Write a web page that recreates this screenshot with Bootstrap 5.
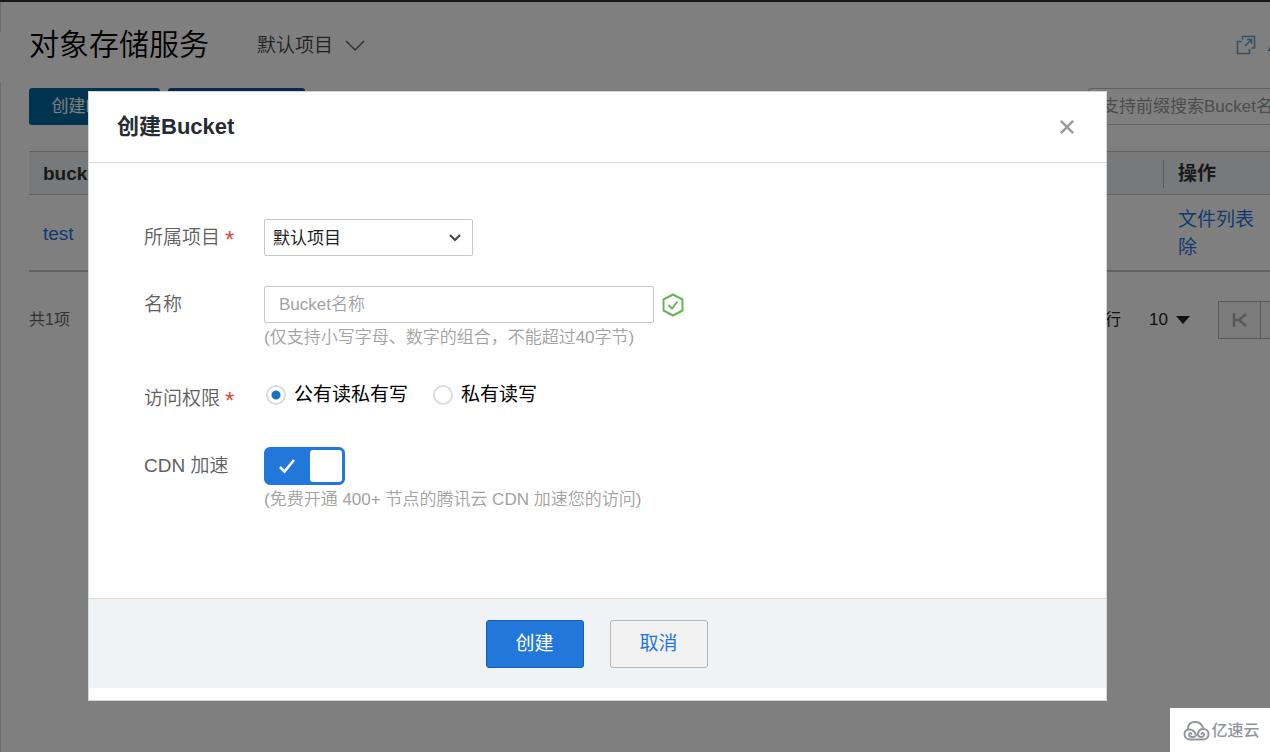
<!DOCTYPE html>
<html lang="zh-CN">
<head>
<meta charset="utf-8">
<meta name="viewport" content="width=device-width, initial-scale=1">
<title>对象存储服务</title>
<link href="https://cdn.jsdelivr.net/npm/bootstrap@5.3.0/dist/css/bootstrap.min.css" rel="stylesheet">
<style>
body { font-family: "Liberation Sans", "Noto Sans CJK SC", sans-serif; font-size: 19px; line-height: 28px; color: #000; background: #fff; }
a { color: #1f75da; text-decoration: none; }
.app-shell { border-top: 2px solid #2c2e38; min-height: 100vh; background: linear-gradient(#d8d8d8 30px, #fff 30px, #fff 80px, #d8d8d8 80px) left / 1px 100% no-repeat; }
/* the console is wider than a small window and is cut at its right edge */
.app-page { width: calc(100% + 120px); padding-left: 29px; }
.app-head { height: 86px; }
.app-title { font-size: 30px; line-height: 40px; font-weight: 350; }
.project-menu { color: #444; font-weight: 350; border: 0; padding: 2px 0 0; font-size: 19px; margin-left: 48px; }
.docs-link { width: 154px; }
.tool-btn { height: 37px; font-size: 17px; line-height: 24px; border: 0; border-radius: 3px; padding: 6px 0; color: #fff; }
.tool-create { width: 131px; background: #06699f; }
.tool-repair { width: 137px; background: #17529a; }
.tool-search { width: 302px; height: 37px; border: 1px solid #c4c4c4; border-radius: 3px; font-size: 17px; padding: 0 13px; }
.tool-search::placeholder { color: #999; opacity: 1; }
.bucket-table { margin: 26px 0 0; border-bottom: 2px solid #c4c4c4; }
.bucket-table > :not(caption) > * > * { padding: 2px 14px 0; vertical-align: middle; }
.bucket-table th { height: 43px; background: #eff2f5; border-top: 1px solid #c4c4c4; border-bottom: 1px solid #c4c4c4; color: #333; }
.bucket-table td { height: 76px; border: 0; }
.bucket-table > tbody > tr > td { padding-top: 4px; }
.col-action { width: 226px; }
.col-action-title { border-left: 1px solid #bbb; margin-left: -15px; padding-left: 14px; }
.pager-row { margin-top: 29px; font-size: 16px; color: #666; }
.pager-size { font-weight: 500; color: #222; border: 0; padding: 0; margin: 0 28px; font-size: 17px; }
.pager-btn { width: 43px; height: 38px; border: 1px solid #b4b4b4; border-radius: 0; padding: 0; background: #f7f7f7; }
.pager-btn + .pager-btn { border-left: 0; }

.mask { background: rgba(0, 0, 0, .5); padding: 91px 163px 52px 88px; z-index: 10; }
.dialog { background: #fff; border: 1px solid #d4d6d8; }
.dialog-head { height: 71px; padding: 0 28px; border-bottom: 1px solid #d4d8dc; }
.dialog-title { font-size: 22px; line-height: 32px; font-weight: 700; color: #262c33; }
.dialog-body { padding: 56px 55px 86px; }
.dialog-foot { height: 90px; background: #eff3f6; border-top: 1px solid #dcdee0; margin-bottom: 12px; padding-right: 2px; gap: 26px; }
.field-row { min-height: 37px; margin-bottom: 30px; }
.field-label { width: 120px; flex: none; color: #606060; font-weight: 350; padding-top: 5px; }
.star { color: #e0483e; margin-left: 5px; font-size: 24px; line-height: 20px; vertical-align: -4px; }
.hint { color: #a2a2a2; font-size: 17px; line-height: 24px; font-weight: 350; margin-top: 3px; }
.box { height: 37px; border: 1px solid #c4c7ca; border-radius: 2px; font-size: 17px; line-height: 24px; color: #222; }
.box-select { width: 209px; padding: 3px 32px 0 8px; background: url("data:image/svg+xml,%3Csvg xmlns='http://www.w3.org/2000/svg' viewBox='0 0 14 10'%3E%3Cpath d='M2 2l5 5 5-5' fill='none' stroke='%23454a54' stroke-width='2.2'/%3E%3C/svg%3E") right 10px center / 14px 10px no-repeat; }
.box-name { width: 390px; padding: 0 14px; }
.box-name::placeholder { color: #a2a2a2; opacity: 1; font-weight: 350; }
.access-group { gap: 25px; padding-left: 2px; }
.pick { gap: 8px; height: 29px; }
.pick input { appearance: none; width: 20px; height: 20px; margin: 0; border: 2px solid #d9dbdd; border-radius: 50%; background: #fff; }
.pick input:checked { background: radial-gradient(circle, #1a71c4 4px, #fff 5px); }
.cdn-switch { appearance: none; display: block; width: 81px; height: 38px; margin: 0; border: 3px solid #2277da; border-radius: 6px; background: #2277da url("data:image/svg+xml,%3Csvg xmlns='http://www.w3.org/2000/svg' viewBox='0 0 18 16'%3E%3Cpath d='M2 9l4.5 4.5L16 2' fill='none' stroke='white' stroke-width='2.6'/%3E%3C/svg%3E") 11px 8px / 18px 16px no-repeat; }
.cdn-switch::after { content: ""; display: block; width: 32px; height: 32px; margin-left: auto; background: #fff; border-radius: 3px; }
.foot-btn { width: 98px; height: 48px; font-size: 19px; border-radius: 3px; padding: 2px 0 0; }
.foot-ok { background: #2277da; border: 1px solid #1162b0; color: #fff; }
.foot-cancel { background: #f2f2f2; border: 1px solid #b4b8bb; color: #2277da; }
.brand { width: 100px; height: 44px; background: #fff; color: #92979f; font-size: 16px; font-weight: 500; z-index: 20; gap: 1px; padding: 2px 0 0 3px; }
</style>
</head>
<body>
<div class="app-shell overflow-hidden">
  <main class="app-page">
    <header class="app-head d-flex align-items-center">
      <h1 class="app-title mb-0">对象存储服务</h1>
      <button type="button" class="project-menu btn d-flex align-items-center gap-2">默认项目
        <svg class="ms-1" width="20" height="12" viewBox="0 0 20 12" fill="none" stroke="#666" stroke-width="1.5"><path d="M1 1l9 9 9-9"/></svg>
      </button>
      <a href="#" class="docs-link ms-auto d-flex align-items-center">
        <svg width="20" height="20" viewBox="0 0 20 20" fill="none" stroke="#6ba5ce" stroke-width="1.6"><path d="M6 6.500H1.500v12h12V14M6.500 4.500V1.500H18.500V13H15.500M9 11l6.500-6.500M11 4.500h4.500v4.500"/></svg>
        <span class="ms-2 ps-1">API文档</span>
      </a>
    </header>
    <div class="d-flex gap-2">
      <button type="button" class="tool-btn tool-create">创建Bucket</button>
      <button type="button" class="tool-btn tool-repair" aria-label="其他操作"></button>
      <input type="search" class="tool-search ms-auto" aria-label="搜索" placeholder="支持前缀搜索Bucket名称">
    </div>
    <table class="table bucket-table">
      <thead><tr><th>bucket</th><th class="col-action"><div class="col-action-title">操作</div></th></tr></thead>
      <tbody><tr><td><a href="#">test</a></td><td class="col-action"><a href="#">文件列表<br>除</a></td></tr></tbody>
    </table>
    <div class="pager-row d-flex align-items-center">
      <span>共1项</span>
      <span class="ms-auto text-dark">每页显示行</span>
      <button type="button" class="pager-size btn d-flex align-items-center">10
        <svg class="ms-2" width="14" height="8" viewBox="0 0 14 8"><path d="M0 0h14L7 8z" fill="#222"/></svg>
      </button>
      <button type="button" class="pager-btn btn" aria-label="首页"><svg width="16" height="16" viewBox="0 0 16 16" fill="none" stroke="#b4b4b4" stroke-width="2.500"><path d="M2 1v14M14 2L7 8l7 6M2 8h6"/></svg></button>
      <button type="button" class="pager-btn btn" aria-label="上一页"></button>
      <button type="button" class="pager-btn btn" aria-label="下一页"></button>
      <button type="button" class="pager-btn btn" aria-label="末页"></button>
    </div>
  </main>
</div>

<div class="mask position-fixed top-0 start-0 w-100 h-100">
  <form class="dialog d-flex flex-column" role="dialog" aria-labelledby="dialogTitle">
    <div class="dialog-head d-flex align-items-center justify-content-between">
      <h2 id="dialogTitle" class="dialog-title mb-0">创建Bucket</h2>
      <button type="button" class="btn p-0 border-0 d-flex me-1" aria-label="关闭"><svg width="14" height="14" viewBox="0 0 16 16" stroke="#999" stroke-width="2.800"><path d="M1 1l14 14M15 1L1 15"/></svg></button>
    </div>
    <div class="dialog-body">
      <div class="field-row d-flex">
        <label class="field-label" for="project">所属项目<span class="star">*</span></label>
        <select id="project" class="form-select box box-select"><option>默认项目</option></select>
      </div>
      <div class="field-row d-flex">
        <label class="field-label" for="bucketName">名称</label>
        <div>
          <div class="d-flex align-items-center gap-2">
            <input id="bucketName" type="text" class="form-control box box-name" placeholder="Bucket名称">
            <svg width="22" height="24" viewBox="0 0 22 24" fill="none" stroke="#65b757" stroke-width="2"><path d="M11 1.500L20.500 6.500V17.500L11 22.500L1.500 17.500V6.500z" stroke-linejoin="round"/><path d="M6.500 12l3.500 3.500L15.500 8.500"/></svg>
          </div>
          <div class="hint">(仅支持小写字母、数字的组合，不能超过40字节)</div>
        </div>
      </div>
      <div class="field-row d-flex">
        <span class="field-label" id="accessLabel">访问权限<span class="star">*</span></span>
        <div class="access-group d-flex" role="radiogroup" aria-labelledby="accessLabel">
          <label class="pick d-flex align-items-center"><input type="radio" name="access" checked>公有读私有写</label>
          <label class="pick d-flex align-items-center"><input type="radio" name="access">私有读写</label>
        </div>
      </div>
      <div class="d-flex">
        <label class="field-label" for="cdn">CDN 加速</label>
        <div>
          <input id="cdn" type="checkbox" role="switch" class="cdn-switch" checked>
          <div class="hint">(免费开通 400+ 节点的腾讯云 CDN 加速您的访问)</div>
        </div>
      </div>
    </div>
    <div class="dialog-foot d-flex align-items-center justify-content-center">
      <button type="submit" class="foot-btn btn foot-ok">创建</button>
      <button type="button" class="foot-btn btn foot-cancel">取消</button>
    </div>
  </form>
</div>

<div class="brand position-fixed bottom-0 end-0 d-flex align-items-center justify-content-center">
  <svg width="27" height="20" viewBox="0 0 27 20" fill="none" stroke="#92979f" stroke-width="2" stroke-linecap="round"><path d="M5 7C6 -1 17 -1 20 6.500M13 14C11 6.500 1.500 7 1.500 13C1.500 16.500 4 18.500 7 18.500H20C23 18.500 25.500 16.500 25.500 13C25.500 6.500 16 6.500 15 12.500C14.500 17 21 17 21 13.500C21 12 19 11.500 18.500 13M13 14C12 17 6 16.500 6 13.500C6 12 8 11.500 8.500 13"/></svg>
  <span>亿速云</span>
</div>
<script src="https://cdn.jsdelivr.net/npm/bootstrap@5.3.0/dist/js/bootstrap.bundle.min.js"></script>
</body>
</html>
